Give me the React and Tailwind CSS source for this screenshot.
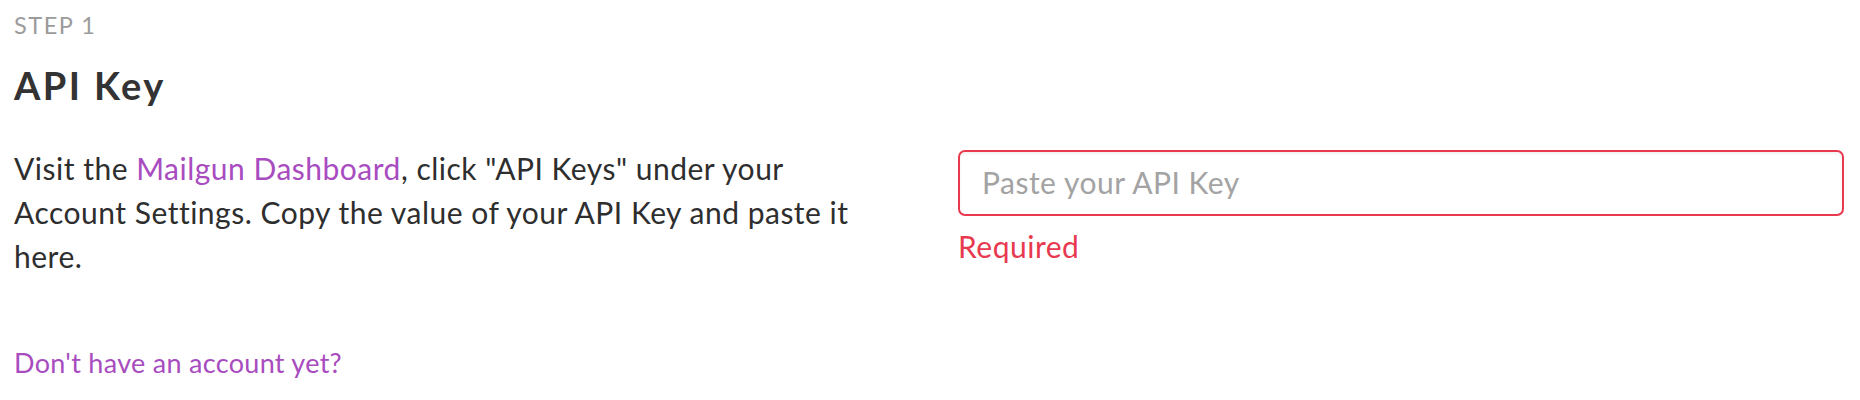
import React, { useState } from 'react';

const App = () => {
  const [apiKey, setApiKey] = useState("");

  return (
    <div className="min-h-screen bg-white font-['Lato',sans-serif] pl-[14px] pr-[16px]">
      {/* header */}
      <div className="pt-[11px] text-[23.5px] leading-[28px] text-[#9b9b9b] tracking-[1.5px]">STEP 1</div>
      <h1 className="mt-[24px] text-[38px] leading-[44px] font-bold text-[#333333] tracking-[2.4px]">API Key</h1>

      {/* two columns */}
      <div className="mt-[39px] grid grid-cols-[880px_886px] gap-x-[64px] items-start">
        <p className="text-[30px] leading-[44px] tracking-[0.5px] text-[#2e2e2e]">
          Visit the <a href="#" className="text-[#a84cc0]">Mailgun Dashboard</a>, click "API Keys" under your Account Settings. Copy the value of your API Key and paste it here.
        </p>

        <div className="mt-[4px] flex flex-col">
          <input
            type="text"
            value={apiKey}
            onChange={(e) => setApiKey(e.target.value)}
            placeholder="Paste your API Key"
            className="h-[66px] w-full rounded-[7px] border-2 border-[#e8394f] bg-white px-[22px] pb-[3px] text-[30px] tracking-[0.5px] text-[#333] shadow-[inset_0_2px_3px_rgba(0,0,0,0.06)] outline-none placeholder:text-[#a3a3a3]"
          />
          <span className="mt-[8px] text-[30px] leading-[44px] tracking-[0.5px] text-[#e8394f]">Required</span>
        </div>
      </div>

      {/* footer link */}
      <a href="#" className="mt-[67px] block w-fit text-[27px] leading-[36px] tracking-[0.3px] text-[#a84cc0]">
        Don't have an account yet?
      </a>
    </div>
  );
};

export default App;
